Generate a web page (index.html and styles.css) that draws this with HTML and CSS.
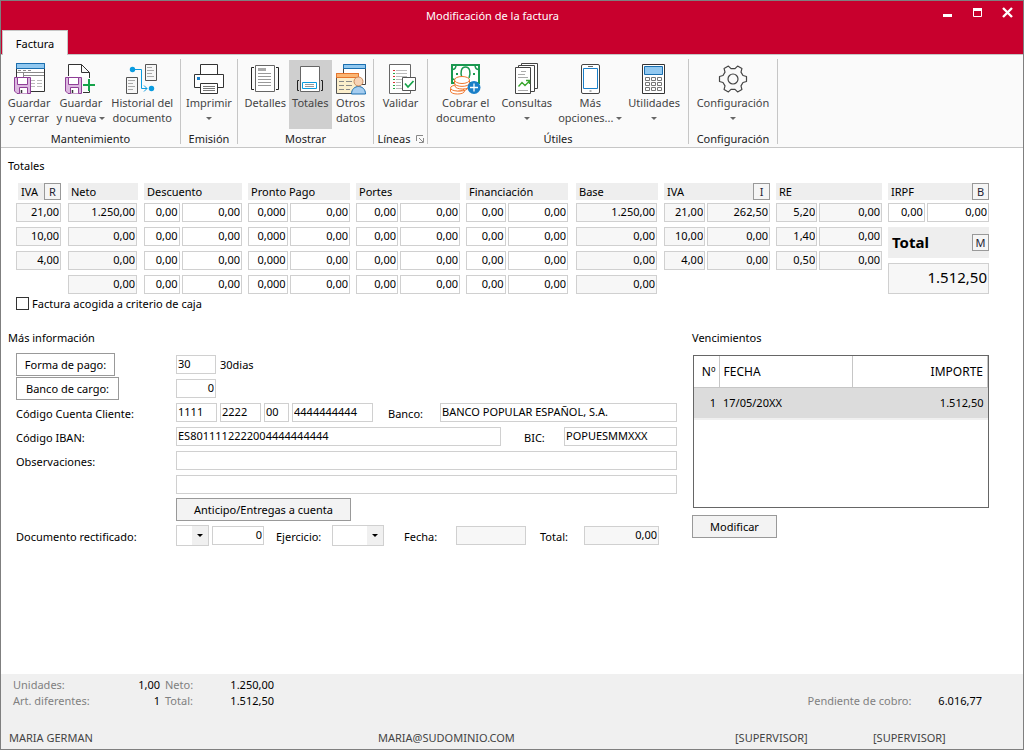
FILE: index.html
```html
<!DOCTYPE html>
<html lang="es">
<head>
<meta charset="utf-8">
<title>Modificación de la factura</title>
<link rel="stylesheet" href="styles.css">
</head>
<body>
<div class="window">
  <header class="titlebar">
    <div class="caption">
      <h1 class="title">Modificación de la factura</h1>
      <div class="winbuttons">
        <button type="button" class="winbtn" aria-label="Minimizar"><svg width="11" height="11" viewBox="0 0 11 11"><path d="M1 8.500h9" stroke="#fff" stroke-width="3"/></svg></button>
        <button type="button" class="winbtn" aria-label="Maximizar"><svg width="11" height="11" viewBox="0 0 11 11"><path d="M1.500 1.500h8v8h-8z" fill="none" stroke="#fff"/><path d="M1 2.500h9" stroke="#fff" stroke-width="3"/></svg></button>
        <button type="button" class="winbtn" aria-label="Cerrar"><svg width="11" height="11" viewBox="0 0 11 11"><path d="M1 1l9 9M10 1l-9 9" stroke="#fff" stroke-width="2.400"/></svg></button>
      </div>
    </div>
    <button type="button" class="tab">Factura</button>
  </header>

  <nav class="ribbon" aria-label="Cinta de opciones">
    <section class="group g-mant">
      <div class="tools">
        <button type="button" class="tool"><svg class="icon" viewBox="0 0 32 33">
          <path d="M3.500 1.500h28v28h-28z" fill="#fff" stroke="#333"/><path d="M3.500 1.500h28v5h-28z" fill="#91c8f0" stroke="#1a6fb0"/>
          <path d="M5 8.500h3M10 8.500h3M15 8.500h3M4 10.500h27M10.500 10v5M11 13.500h20" stroke="#8a8a8a"/><path d="M18 18.500h4M24 18.500h5M18 21.500h4M24 21.500h5M18 24.500h4M24 24.500h5" stroke="#bbb"/>
          <path d="M1.500 15.500h16v16H4l-2.500-2.500z" fill="#dcb8e0" stroke="#8f3f97"/><path d="M4.500 15.500h10v7h-10z" fill="#fff" stroke="#8f3f97"/><path d="M6.500 31.500v-6h8v6" fill="#fff" stroke="#8f3f97"/><path d="M8.500 28v3" stroke="#333" stroke-width="1.500"/></svg>
          <span>Guardar<br>y cerrar</span></button>
        <button type="button" class="tool"><svg class="icon" viewBox="0 0 32 33">
          <path d="M3.500 14V2.500h13l8 8V16M16.500 2.500v8h8M18 30.500h6.500v-2" fill="#fff" stroke="#333"/>
          <path d="M.5 15.500h16v16H3L.5 29z" fill="#dcb8e0" stroke="#8f3f97"/><path d="M3.500 15.500h10v7h-10z" fill="#fff" stroke="#8f3f97"/><path d="M5.500 31.500v-6h8v6" fill="#fff" stroke="#8f3f97"/><path d="M7.500 28v3" stroke="#333" stroke-width="1.500"/>
          <path d="M18 23h12M24 17v12" stroke="#16a34a" stroke-width="2"/></svg>
          <span>Guardar<br>y nueva <i class="caret"></i></span></button>
        <button type="button" class="tool"><svg class="icon" viewBox="0 0 32 33">
          <path d="M.5 15.500h11v16H.5zM19.500 2.500h11v16h-11z" fill="#f7f7f7" stroke="#555"/>
          <path d="M2 18.500h7M2 21.500h5M2 24.500h7M2 27.500h5M21 5.500h5M21 8.500h7M21 11.500h5M21 14.500h7" stroke="#aaa"/>
          <path d="M6.500 7.500h9v19H21M18 23.500l3 3-3 3" fill="none" stroke="#0a9ce0"/><circle cx="6.500" cy="7.500" r="2.700" fill="#0a9ce0"/><circle cx="25.500" cy="26.500" r="2.700" fill="#0a9ce0"/></svg>
          <span>Historial del<br>documento</span></button>
      </div>
      <h2 class="glabel">Mantenimiento</h2>
    </section>
    <section class="group g-emi">
      <div class="tools">
        <button type="button" class="tool"><svg class="icon" viewBox="0 0 32 33">
          <path d="M7.500 12.500v-10h17v10M1.500 12.500h29v13h-29z" fill="#fff" stroke="#333"/><path d="M7.500 21.500h17v10h-17z" fill="#fff" stroke="#333"/><path d="M4 15h3v3H4z" fill="#1a7fc8"/><path d="M10 24.500h12M10 26.500h12M10 28.500h12" stroke="#777"/></svg>
          <span>Imprimir<br><i class="caret"></i></span></button>
      </div>
      <h2 class="glabel">Emisión</h2>
    </section>
    <section class="group g-most">
      <div class="tools">
        <button type="button" class="tool"><svg class="icon" viewBox="0 0 32 33">
          <path d="M6.500 3.500h19v26h-19z" fill="#fff" stroke="#666"/><path d="M5 5.500H2.500v22H5M27 5.500h2.500v22H27" fill="none" stroke="#222"/><path d="M9 6h8v3H9z" fill="#aaa"/><path d="M9 11.500h13M9 14.500h13M9 17.500h13M9 20.500h13M9 23.500h13" stroke="#999"/></svg>
          <span>Detalles</span></button>
        <button type="button" class="tool active" aria-pressed="true"><svg class="icon" viewBox="0 0 32 33">
          <path d="M6.500 4.500h19v25h-19z" fill="#fff" stroke="#666"/><path d="M5 18.500H3.500v10H5M27 18.500h1.500v10H27" fill="none" stroke="#222"/><path d="M8.500 20.500h14v6h-14z" fill="#fff" stroke="#0a9ce0"/><path d="M11 22.500h9M11 24.500h9" stroke="#999"/></svg>
          <span>Totales</span></button>
        <button type="button" class="tool"><svg class="icon" viewBox="0 0 32 33">
          <path d="M8.500 2.500h22v20h-22z" fill="#fff" stroke="#444"/><path d="M8.500 2.500h22v4h-22z" fill="#91c8f0" stroke="#1a6fb0"/>
          <path d="M1.500 11.500h22v20h-22z" fill="#fbeecb" stroke="#555"/><path d="M1.500 11.500h22v4h-22z" fill="#fbb673" stroke="#e8762c"/><path d="M4 19.500h5M11 19.500h6M4 23.500h5M11 23.500h6M4 27.500h5M11 27.500h4" stroke="#888"/>
          <path d="M16.500 32c0-10 14-10 14 0z" fill="#a5cdf0" stroke="#1a6fb0"/><circle cx="23.500" cy="19.500" r="4.500" fill="#f7d3b5" stroke="#c98a5c"/></svg>
          <span>Otros<br>datos</span></button>
      </div>
      <h2 class="glabel">Mostrar</h2>
    </section>
    <section class="group g-lin">
      <div class="tools">
        <button type="button" class="tool"><svg class="icon" viewBox="0 0 32 33">
          <path d="M4.500 2.500h21v29h-21z" fill="#fff" stroke="#666"/><path d="M11 8.500h11M11 11.500h11M11 14.500h11M11 17.500h6M11 20.500h5M11 23.500h5M11 26.500h6" stroke="#bbb"/>
          <path d="M8 8.500h2M8 14.500h2M8 20.500h2" stroke="#d33"/><path d="M8 11.500h2M8 17.500h2M8 23.500h2M8 26.500h2" stroke="#2a4"/>
          <path d="M17.500 15.500h13v13h-13z" fill="#fff" stroke="#555"/><path d="M20 21.500l3 3.500 5.500-6" fill="none" stroke="#16a34a" stroke-width="1.700"/></svg>
          <span>Validar</span></button>
      </div>
      <h2 class="glabel">Líneas <svg width="8" height="8" viewBox="0 0 8 8"><path d="M.5 6V.5H7M3 3l4 4M7.500 3v4.500H3" fill="none" stroke="#888"/></svg></h2>
    </section>
    <section class="group g-util">
      <div class="tools">
        <button type="button" class="tool"><svg class="icon" viewBox="0 0 32 33">
          <path d="M2 3h27v18H2z" fill="#fff" stroke="#1a9850" stroke-width="2"/><path d="M2 7.500c3 0 4-2 4-4.500M29 7.500c-3 0-4-2-4-4.500M2 17c3 0 4 2 4 4" fill="none" stroke="#1a9850" stroke-width="1.500"/><path d="M12 16c-2-5-1-11 3.500-11s5.500 6 3.500 11" fill="none" stroke="#1a9850" stroke-width="1.500"/><path d="M6 12h2M23 12h2" stroke="#1a9850" stroke-width="2"/>
          <g fill="#fff" stroke="#f07830"><path d="M.5 27v2c0 4 14 4 14 0v-2"/><path d="M2.500 24v2c0 4 15 4 15 0v-2"/><ellipse cx="7.500" cy="26" rx="7" ry="3"/><path d="M5 22v2c0 4 15 4 15 0v-2"/><path d="M4.500 18v3c0 4.500 15 4.500 15 0v-3"/><ellipse cx="12" cy="18" rx="7.500" ry="3.500"/></g>
          <circle cx="24" cy="25.500" r="6.500" fill="#1a7fc8"/><path d="M20 25.500h8M24 21.500v8" stroke="#fff" stroke-width="1.300"/></svg>
          <span>Cobrar el<br>documento</span></button>
        <button type="button" class="tool"><svg class="icon" viewBox="0 0 32 33">
          <g fill="#fff" stroke="#444"><path d="M10.500 1.500h16v25h-16z"/><path d="M7.500 3.500h16v26h-16z"/><path d="M4.500 5.500h15v26h-15z"/></g><path d="M10 9.500h5M7 12.500h7M7 15.500h10M7 28.500h10" stroke="#aaa"/><path d="M7.500 24.500l3.500-4 3 3 4.500-4.500M15 18.500h3.500V22" fill="none" stroke="#3aa62e" stroke-width="1.300"/></svg>
          <span>Consultas<br><i class="caret"></i></span></button>
        <button type="button" class="tool"><svg class="icon" viewBox="0 0 32 33">
          <rect x="7.500" y="2.500" width="18" height="29" rx="1.500" fill="#fff" stroke="#444"/><path d="M9.500 6.500h14v20h-14z" fill="#fff" stroke="#1a7fc8"/><path d="M14 4.500h5M15.500 29h2" stroke="#666"/></svg>
          <span>Más<br>opciones... <i class="caret"></i></span></button>
        <button type="button" class="tool"><svg class="icon" viewBox="0 0 32 33">
          <path d="M4.500 2.500h22v29h-22z" fill="#fff" stroke="#333"/><path d="M6.500 4.500h18v8h-18z" fill="#91c8f0" stroke="#1a6fb0"/><path d="M7.500 15.500h4v3h-4zM13.500 15.500h4v3h-4zM19.500 15.500h4v3h-4zM7.500 20.500h4v3h-4zM13.500 20.500h4v3h-4zM19.500 20.500h4v3h-4zM7.500 25.500h4v3h-4zM13.500 25.500h4v3h-4zM19.500 25.500h4v3h-4z" fill="#fff" stroke="#777"/></svg>
          <span>Utilidades<br><i class="caret"></i></span></button>
      </div>
      <h2 class="glabel">Útiles</h2>
    </section>
    <section class="group g-conf">
      <div class="tools">
        <button type="button" class="tool"><svg class="icon" viewBox="0 0 32 33">
          <g transform="translate(16 17)" fill="none" stroke="#444" stroke-width="1.200" stroke-linejoin="round"><path d="M10-3.500 13.500-2.500V2.500L10 3.500 8 6.900 8.900 10.400 4.600 12.900 2 10.400H-2L-4.600 12.900-8.900 10.400-8 6.900-10 3.500-13.500 2.500V-2.500L-10-3.500-8-6.900-8.900-10.400-4.600-12.900-2-10.400H2L4.600-12.900 8.900-10.400 8-6.900z"/><circle r="5"/></g></svg>
          <span>Configuración<br><i class="caret"></i></span></button>
      </div>
      <h2 class="glabel">Configuración</h2>
    </section>
  </nav>

  <main class="content">
    <h2 class="heading">Totales</h2>
    <div class="totals">
      <section class="col">
        <div class="chead inset"><span>IVA</span><button type="button" class="mini">R</button></div>
        <div class="cells">
          <input class="field num ro" readonly aria-label="IVA 1" value="21,00">
          <input class="field num ro" readonly aria-label="IVA 2" value="10,00">
          <input class="field num ro" readonly aria-label="IVA 3" value="4,00">
        </div>
      </section>
      <section class="col">
        <div class="chead">Neto</div>
        <div class="cells">
          <input class="field num ro" readonly aria-label="Neto 1" value="1.250,00">
          <input class="field num ro" readonly aria-label="Neto 2" value="0,00">
          <input class="field num ro" readonly aria-label="Neto 3" value="0,00">
          <input class="field num ro" readonly aria-label="Neto 4" value="0,00">
        </div>
      </section>
      <section class="col">
        <div class="chead">Descuento</div>
        <div class="cells pair p36">
          <input class="field num" aria-label="Descuento 1 %" value="0,00"><input class="field num" aria-label="Descuento 1" value="0,00">
          <input class="field num" aria-label="Descuento 2 %" value="0,00"><input class="field num" aria-label="Descuento 2" value="0,00">
          <input class="field num" aria-label="Descuento 3 %" value="0,00"><input class="field num" aria-label="Descuento 3" value="0,00">
          <input class="field num" aria-label="Descuento 4 %" value="0,00"><input class="field num" aria-label="Descuento 4" value="0,00">
        </div>
      </section>
      <section class="col">
        <div class="chead">Pronto Pago</div>
        <div class="cells pair p40">
          <input class="field num" aria-label="Pronto pago 1 %" value="0,000"><input class="field num" aria-label="Pronto pago 1" value="0,00">
          <input class="field num" aria-label="Pronto pago 2 %" value="0,000"><input class="field num" aria-label="Pronto pago 2" value="0,00">
          <input class="field num" aria-label="Pronto pago 3 %" value="0,000"><input class="field num" aria-label="Pronto pago 3" value="0,00">
          <input class="field num" aria-label="Pronto pago 4 %" value="0,000"><input class="field num" aria-label="Pronto pago 4" value="0,00">
        </div>
      </section>
      <section class="col">
        <div class="chead">Portes</div>
        <div class="cells pair p42">
          <input class="field num" aria-label="Portes 1 %" value="0,00"><input class="field num" aria-label="Portes 1" value="0,00">
          <input class="field num" aria-label="Portes 2 %" value="0,00"><input class="field num" aria-label="Portes 2" value="0,00">
          <input class="field num" aria-label="Portes 3 %" value="0,00"><input class="field num" aria-label="Portes 3" value="0,00">
          <input class="field num" aria-label="Portes 4 %" value="0,00"><input class="field num" aria-label="Portes 4" value="0,00">
        </div>
      </section>
      <section class="col short">
        <div class="chead">Financiación</div>
        <div class="cells pair p40">
          <input class="field num" aria-label="Financiación 1 %" value="0,00"><input class="field num" aria-label="Financiación 1" value="0,00">
          <input class="field num" aria-label="Financiación 2 %" value="0,00"><input class="field num" aria-label="Financiación 2" value="0,00">
          <input class="field num" aria-label="Financiación 3 %" value="0,00"><input class="field num" aria-label="Financiación 3" value="0,00">
          <input class="field num" aria-label="Financiación 4 %" value="0,00"><input class="field num" aria-label="Financiación 4" value="0,00">
        </div>
      </section>
      <section class="col">
        <div class="chead">Base</div>
        <div class="cells">
          <input class="field num ro" readonly aria-label="Base 1" value="1.250,00">
          <input class="field num ro" readonly aria-label="Base 2" value="0,00">
          <input class="field num ro" readonly aria-label="Base 3" value="0,00">
          <input class="field num ro" readonly aria-label="Base 4" value="0,00">
        </div>
      </section>
      <section class="col">
        <div class="chead"><span>IVA</span><button type="button" class="mini">I</button></div>
        <div class="cells pair p40">
          <input class="field num ro" readonly aria-label="Tipo IVA 1" value="21,00"><input class="field num ro" readonly aria-label="Cuota IVA 1" value="262,50">
          <input class="field num ro" readonly aria-label="Tipo IVA 2" value="10,00"><input class="field num ro" readonly aria-label="Cuota IVA 2" value="0,00">
          <input class="field num ro" readonly aria-label="Tipo IVA 3" value="4,00"><input class="field num ro" readonly aria-label="Cuota IVA 3" value="0,00">
        </div>
      </section>
      <section class="col">
        <div class="chead">RE</div>
        <div class="cells pair p40">
          <input class="field num ro" readonly aria-label="Tipo RE 1" value="5,20"><input class="field num ro" readonly aria-label="Cuota RE 1" value="0,00">
          <input class="field num ro" readonly aria-label="Tipo RE 2" value="1,40"><input class="field num ro" readonly aria-label="Cuota RE 2" value="0,00">
          <input class="field num ro" readonly aria-label="Tipo RE 3" value="0,50"><input class="field num ro" readonly aria-label="Cuota RE 3" value="0,00">
        </div>
      </section>
      <section class="col">
        <div class="chead"><span>IRPF</span><button type="button" class="mini">B</button></div>
        <div class="cells pair p36">
          <input class="field num" aria-label="IRPF %" value="0,00"><input class="field num" aria-label="IRPF" value="0,00">
        </div>
        <div class="total-head"><label for="total">Total</label><button type="button" class="mini">M</button></div>
        <input id="total" class="field num ro total-value" readonly value="1.512,50">
      </section>
    </div>
    <label class="check"><input type="checkbox" class="box">Factura acogida a criterio de caja</label>

    <div class="lower">
      <section>
        <h2 class="heading">Más información</h2>
        <form class="form">
          <div class="row"><div class="lab"><button type="button" class="btn plain">Forma de pago:</button></div>
            <input class="field w40" aria-label="Forma de pago" value="30"><span class="hint">30dias</span></div>
          <div class="row"><div class="lab"><button type="button" class="btn plain wide">Banco de cargo:</button></div>
            <input class="field num w40" aria-label="Banco de cargo" value="0"></div>
          <div class="row"><label class="lab" for="ccc">Código Cuenta Cliente:</label>
            <input id="ccc" class="field w41" value="1111"><input class="field w41" aria-label="Oficina" value="2222"><input class="field w25" aria-label="Dígito de control" value="00"><input class="field w81" aria-label="Cuenta" value="4444444444">
            <label class="lab-banco" for="banco">Banco:</label><input id="banco" class="field grow" value="BANCO POPULAR ESPAÑOL, S.A."></div>
          <div class="row"><label class="lab" for="iban">Código IBAN:</label>
            <input id="iban" class="field grow" value="ES8011112222004444444444"><label class="lab-bic" for="bic">BIC:</label><input id="bic" class="field w113" value="POPUESMMXXX"></div>
          <div class="row"><label class="lab" for="obs">Observaciones:</label><input id="obs" class="field grow"></div>
          <div class="row"><span class="lab"></span><input class="field grow" aria-label="Observaciones, segunda línea"></div>
          <div class="row tall"><span class="lab"></span><button type="button" class="btn advance">Anticipo/Entregas a cuenta</button></div>
          <div class="row tall"><label class="lab" for="serie">Documento rectificado:</label>
            <span class="select w33"><select id="serie"><option></option></select></span>
            <input class="field num w52" aria-label="Número de documento" value="0">
            <label class="lab-ej" for="ejercicio">Ejercicio:</label><span class="select w52"><select id="ejercicio"><option></option></select></span>
            <label class="lab-fecha" for="fecha">Fecha:</label><input id="fecha" class="field ro w70" readonly>
            <label class="lab-total" for="rtotal">Total:</label><input id="rtotal" class="field num ro w75" readonly value="0,00"></div>
        </form>
      </section>
      <section>
        <h2 class="heading">Vencimientos</h2>
        <div class="listbox">
          <table class="dues">
            <thead><tr><th class="c-num">Nº</th><th class="c-date">FECHA</th><th class="c-amt">IMPORTE</th></tr></thead>
            <tbody><tr><td class="c-num">1</td><td class="c-date">17/05/20XX</td><td class="c-amt">1.512,50</td></tr></tbody>
          </table>
        </div>
        <button type="button" class="btn modify">Modificar</button>
      </section>
    </div>
  </main>

  <footer class="footer">
    <div class="summary">
      <dl class="stats">
        <dt>Unidades:</dt><dd>1,00</dd><dt>Neto:</dt><dd>1.250,00</dd>
        <dt>Art. diferentes:</dt><dd>1</dd><dt>Total:</dt><dd>1.512,50</dd>
      </dl>
      <dl class="pending"><dt>Pendiente de cobro:</dt><dd>6.016,77</dd></dl>
    </div>
    <div class="status"><span>MARIA GERMAN</span><span>MARIA@SUDOMINIO.COM</span><span>[SUPERVISOR]</span><span>[SUPERVISOR]</span></div>
  </footer>
</div>
</body>
</html>
```

FILE: styles.css
```css
* { box-sizing: border-box; }
body { margin: 0; font: 11px/15px "Noto Sans", "Open Sans", sans-serif; color: #000; background: #fff; }
button, input, select { font: inherit; color: inherit; margin: 0; border-radius: 0; }
h1, h2, dl, dd { margin: 0; font-size: 11px; font-weight: 400; }

.window { min-height: 100vh; display: flex; flex-direction: column; border: 1px solid #7f7f7f; }

/* Title bar */
.titlebar { background: #c8002d; border-bottom: 1px solid #c6c6c6; padding-left: 1px; }
.caption { display: grid; grid-template-columns: 80px 1fr 120px; height: 29px; align-items: center; }
.title { grid-column: 2; color: #fff; text-align: center; }
.winbuttons { display: flex; justify-content: flex-end; gap: 8px; padding: 0 5px 6px 0; }
.winbtn { width: 22px; height: 18px; padding: 0; border: 0; background: none; display: grid; place-items: center; }
.tab { display: block; width: 66px; height: 25px; margin-bottom: -1px; padding: 0; border: 1px solid #c6c6c6; border-bottom: 0; background: #fafafa; }

/* Ribbon */
.ribbon { display: flex; background: #fafafa; border-bottom: 1px solid #c6c6c6; padding: 4px 0 3px; }
.group { display: flex; flex-direction: column; align-items: center; height: 85px; border-right: 1px solid #c6c6c6; }
.g-mant { width: 180px; }
.g-emi { width: 57px; }
.g-most { width: 136px; }
.g-lin { width: 54px; }
.g-util { width: 261px; }
.g-conf { width: 89px; }
.tools { display: flex; flex: none; height: 70px; padding-top: 1px; }
.tool { padding: 2px 3px 0; border: 0; background: none; color: #444; display: flex; flex-direction: column; align-items: center; line-height: 15px; white-space: nowrap; }
.tool.active { background: #cfcfcf; }
.icon { width: 32px; height: 33px; flex: none; }
.caret { display: inline-block; border: 3px solid transparent; border-top-color: #666; border-bottom: 0; vertical-align: 2px; }
.glabel { display: flex; align-items: center; gap: 5px; flex: none; padding-top: 2px; color: #222; white-space: nowrap; }

/* Content */
.content { flex: 1; padding: 10px 34px 24px 7px; }
.heading { line-height: 16px; }
.totals { display: grid; grid-template-columns: 46fr 70fr 98fr 102fr 104fr 104fr 82fr 106fr 106fr 101fr; column-gap: 6px; margin: 9px 0 0 8px; }
.col { min-width: 0; }
.short { padding-right: 2px; }
.chead { display: flex; justify-content: space-between; align-items: center; height: 17px; margin-bottom: 3px; padding-left: 3px; background: #eee; }
.inset { margin: 0 1px 3px 2px; }
.cells { display: grid; grid-auto-rows: 19px; row-gap: 5px; padding-right: 1px; }
.pair { column-gap: 2px; padding-right: 0; }
.p36 { grid-template-columns: 36fr 61fr; }
.p40 { grid-template-columns: 40fr 61fr; }
.p42 { grid-template-columns: 42fr 60fr; }
.field { width: 100%; min-width: 0; height: 19px; padding: 0 1px 2px; border: 1px solid #d0d0d0; background: #fff; }
.num { text-align: right; }
.ro { background: #f7f7f7; }
.mini { width: 17px; height: 17px; padding: 0; border: 1px solid #999; background: #f5f5f5; color: #223; line-height: 13px; }
.total-head { display: flex; justify-content: space-between; align-items: center; height: 31px; margin: 5px 0; padding-left: 4px; background: #eee; font-size: 15px; font-weight: 700; }
.total-head .mini { font-size: 11px; font-weight: 400; }
.total-value { height: 31px; font-size: 15px; padding-bottom: 4px; }
.check { display: flex; align-items: center; gap: 3px; height: 16px; margin: 1px 0 0 8px; }
.box { appearance: none; width: 13px; height: 13px; border: 1px solid #333; background: #fff; }
.box:checked { background: #333; }

.lower { display: grid; grid-template-columns: minmax(0, 1fr) 297px; column-gap: 15px; margin-top: 19px; }
.form { margin: 6px 0 0 8px; }
.row { display: flex; align-items: center; gap: 3px; height: 24px; }
.row label { padding-top: 2px; }
.lab { flex: none; width: 157px; }
.row.tall { height: 26px; }
.grow { flex: 1; }
.w25 { width: 25px; }
.w33 { width: 33px; }
.w40 { width: 40px; }
.w41 { width: 41px; }
.w52 { width: 52px; }
.w70 { width: 70px; }
.w75 { width: 75px; }
.w81 { width: 81px; }
.w113 { width: 113px; }
.hint { padding-left: 1px; }
.lab-banco { width: 61px; padding-left: 12px; }
.lab-bic { width: 57px; padding-left: 20px; }
.lab-ej { width: 62px; padding-left: 9px; }
.lab-fecha { width: 66px; padding-left: 17px; }
.lab-total { width: 52px; padding-left: 11px; }
.btn { height: 23px; padding: 0; border: 1px solid #999; background: #f3f3f3; white-space: nowrap; }
.plain { display: block; width: 99px; background: #fff; }
.wide { width: 103px; }
.advance { width: 175px; }
.modify { width: 85px; margin-top: 7px; }
.select { position: relative; height: 21px; flex: none; }
.select select { display: block; width: 100%; height: 100%; appearance: none; border: 1px solid #d0d0d0; background: linear-gradient(#f0f0f0, #f0f0f0) right / 16px 100% no-repeat #fff; }
.select::after { content: ""; position: absolute; right: 6px; top: 9px; border: 3px solid transparent; border-top-color: #000; border-bottom: 0; pointer-events: none; }

.listbox { height: 153px; margin: 9px 0 0 1px; border: 1px solid #666; background: #fff; }
.dues { width: 100%; border-collapse: collapse; table-layout: fixed; font-size: 12px; }
.dues th { height: 31px; padding: 0 4px; font-weight: 400; text-align: left; border-right: 1px solid #c6c6c6; border-bottom: 1px solid #c6c6c6; }
.dues td { height: 32px; padding: 0 4px; background: #dcdcdc; border-bottom: 2px solid #f0f0f0; font-size: 11px; }
.dues .c-num { width: 25px; padding: 0 3px; text-align: right; }
.dues .c-date { width: 133px; }
.dues .c-amt { text-align: right; }

/* Footer */
.footer { background: #f0f0f0; padding: 3px 0; }
.summary { display: flex; justify-content: space-between; align-items: flex-end; padding: 0 41px 0 12px; line-height: 16px; }
.stats { display: grid; grid-template-columns: 92px 55px 50px 64px; }
.stats dt:nth-of-type(even) { padding-left: 5px; }
.summary dt { color: #808080; white-space: nowrap; }
.summary dd { text-align: right; }
.pending { display: flex; gap: 27px; }
.status { display: grid; grid-template-columns: 369fr 357fr 138fr 150fr; margin-top: 21px; padding-left: 8px; line-height: 16px; color: #444; }
```
